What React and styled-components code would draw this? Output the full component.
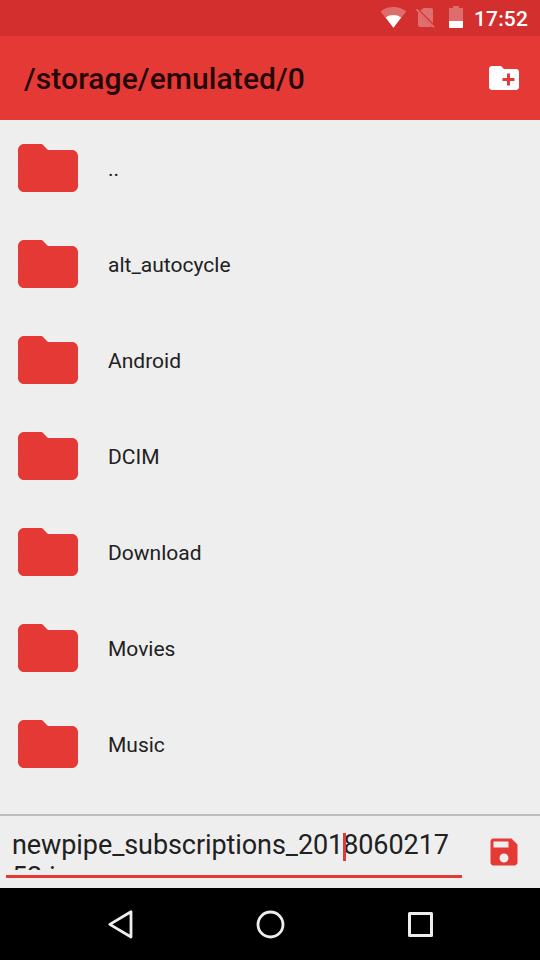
import React from 'react';
import styled, { createGlobalStyle } from 'styled-components';

const GlobalStyle = createGlobalStyle`
  * { box-sizing: border-box; }
  body { margin: 0; font-family: Roboto, sans-serif; }
  svg { display: block; flex: none; }
`;

const Screen = styled.div`
  display: flex;
  flex-direction: column;
  width: 540px;
  height: 960px;
  overflow: hidden;
  background: #eeeeee;
`;

const StatusBar = styled.div`
  display: flex;
  align-items: center;
  height: 36px;
  flex: none;
  padding-left: 380px;
  background: #d32f2f;
  color: #fff;
`;

const Clock = styled.span`
  margin-left: 4px;
  font-size: 21px;
  font-weight: 500;
  line-height: 36px;
  padding-top: 2px;
  letter-spacing: 0.15px;
`;

const AppBar = styled.header`
  display: flex;
  align-items: center;
  justify-content: space-between;
  height: 84px;
  flex: none;
  padding: 0 18px 0 24px;
  background: #e53935;
`;

const Title = styled.h1`
  margin: 2px 0 0;
  font-size: 30px;
  font-weight: 500;
  line-height: 36px;
  letter-spacing: 0.09px;
  color: rgba(0, 0, 0, 0.87);
`;

const FileList = styled.ul`
  flex: 1;
  min-height: 0;
  margin: 0;
  padding: 0;
  list-style: none;
  overflow: hidden;
`;

const FileRow = styled.li`
  display: flex;
  align-items: center;
  gap: 24px;
  height: 96px;
  padding: 0 12px;
`;

const FileName = styled.span`
  padding-top: 2px;
  font-size: 21px;
  line-height: 26px;
  color: #212121;
`;

const SaveBar = styled.footer`
  display: flex;
  align-items: center;
  justify-content: space-between;
  height: 74px;
  flex: none;
  padding: 0 18px 0 6px;
  border-top: 2px solid #bdbdbd;
`;

const NameField = styled.div`
  position: relative;
  width: 456px;
  height: 62px;
  padding: 13px 6px 0;
  align-self: flex-start;
  border-bottom: 3px solid #e53935;
`;

const NameText = styled.div`
  height: 41px;
  overflow: hidden;
  font-size: 27px;
  line-height: 32px;
  letter-spacing: -0.08px;
  color: #212121;
`;

const Caret = styled.span`
  position: absolute;
  left: 337px;
  top: 17px;
  width: 3px;
  height: 28px;
  background: #e53935;
`;

const NavBar = styled.nav`
  display: flex;
  align-items: center;
  justify-content: center;
  height: 72px;
  flex: none;
  background: #000;
`;

const NavButton = styled.div`
  display: flex;
  justify-content: center;
  width: 150px;
`;

const FOLDERS = ['..', 'alt_autocycle', 'Android', 'DCIM', 'Download', 'Movies', 'Music'];

const Icon = ({ size, color, d }) => (
  <svg width={size} height={size} viewBox="0 0 24 24" fill={color}>
    <path d={d} />
  </svg>
);

const FOLDER = 'M10 4H4c-1.1 0-1.99.9-1.99 2L2 18c0 1.1.9 2 2 2h16c1.1 0 2-.9 2-2V8c0-1.1-.9-2-2-2h-8l-2-2z';
const NEW_FOLDER =
  'M20 6h-8l-2-2H4c-1.11 0-1.99.89-1.99 2L2 18c0 1.11.89 2 2 2h16c1.11 0 2-.89 2-2V8c0-1.11-.89-2-2-2zm-1 8h-3v3h-2v-3h-3v-2h3V9h2v3h3v2z';
const SAVE =
  'M17 3H5c-1.11 0-2 .9-2 2v14c0 1.1.89 2 2 2h14c1.1 0 2-.9 2-2V7l-4-4zm-5 16c-1.66 0-3-1.34-3-3s1.34-3 3-3 3 1.34 3 3-1.34 3-3 3zm3-10H5V5h10v4z';

const StatusIcons = () => (
  <svg width="90" height="36" viewBox="380 0 90 36" fill="#fff">
    <path opacity=".3" d="M393.4 27.7 380.6 11.4Q386.2 7 393.4 7T406.2 11.4Z" />
    <path d="M393.4 27.7 385.6 17.4Q389 15 393.4 15T401.2 17.4Z" />
    <g opacity=".3">
      <path d="M423.5 8H431.2Q433 8 433 9.8V23.2L420.2 10.6Z" />
      <path d="M418 12.3 431.8 26.6Q431.4 27 430.6 27H420Q418 27 418 25Z" />
      <path d="M416.4 9.4 434 27.4" stroke="#fff" strokeWidth="1.9" />
    </g>
    <path opacity=".3" d="M449 21V9Q449 8 450 8H453V6H459V8H462Q463 8 463 9V21Z" />
    <path d="M449 21H463V27Q463 28 462 28H450Q449 28 449 27Z" />
  </svg>
);

export default function App() {
  return (
    <Screen>
      <GlobalStyle />
      <StatusBar>
        <StatusIcons />
        <Clock>17:52</Clock>
      </StatusBar>
      <AppBar>
        <Title>/storage/emulated/0</Title>
        <Icon size={36} color="#fff" d={NEW_FOLDER} />
      </AppBar>
      <FileList>
        {FOLDERS.map((name) => (
          <FileRow key={name}>
            <Icon size={72} color="#e53935" d={FOLDER} />
            <FileName>{name}</FileName>
          </FileRow>
        ))}
      </FileList>
      <SaveBar>
        <NameField>
          <NameText>
            newpipe_subscriptions_2018060217
            <br />
            52.json
          </NameText>
          <Caret />
        </NameField>
        <Icon size={36} color="#e53935" d={SAVE} />
      </SaveBar>
      <NavBar>
        <NavButton>
          <svg width="36" height="36" viewBox="102 906 36 36" fill="none" stroke="#eee" strokeWidth="2.8" strokeLinejoin="round">
            <path d="M131 911.7V937L109.8 924.4Z" />
          </svg>
        </NavButton>
        <NavButton>
          <svg width="36" height="36" viewBox="252 906 36 36" fill="none" stroke="#eee" strokeWidth="2.8">
            <circle cx="270.5" cy="924.5" r="12.5" />
          </svg>
        </NavButton>
        <NavButton>
          <svg width="36" height="36" viewBox="402 906 36 36" fill="none" stroke="#eee" strokeWidth="3" strokeLinejoin="round">
            <rect x="409.5" y="913.5" width="22" height="22" />
          </svg>
        </NavButton>
      </NavBar>
    </Screen>
  );
}
